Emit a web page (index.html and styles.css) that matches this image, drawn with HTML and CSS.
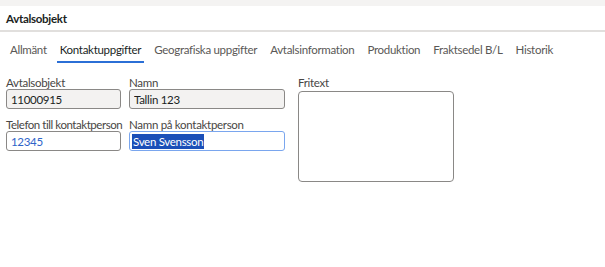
FILE: index.html
```html
<!DOCTYPE html>
<html lang="en">
<head>
    <meta charset="UTF-8">
    <title>Avtalsobjekt</title>
    <link rel="stylesheet" href="styles.css">
</head>
<body>

<div class="topbar"></div>

<div class="header">
    <h1>Avtalsobjekt</h1>
</div>

<!-- Tabs -->
<div class="tabs">
    <span class="tab">Allmänt</span>
    <span class="tab active">Kontaktuppgifter</span>
    <span class="tab">Geografiska uppgifter</span>
    <span class="tab">Avtalsinformation</span>
    <span class="tab">Produktion</span>
    <span class="tab">Fraktsedel B/L</span>
    <span class="tab">Historik</span>
</div>

<!-- Contact form -->
<div class="form">
    <div class="fields">
        <div class="field">
            <label>Avtalsobjekt</label>
            <input type="text" class="readonly" value="11000915" readonly>
        </div>
        <div class="field">
            <label>Namn</label>
            <input type="text" class="readonly" value="Tallin 123" readonly>
        </div>
        <div class="field">
            <label>Telefon till kontaktperson</label>
            <input type="text" class="link" value="12345">
        </div>
        <div class="field">
            <label>Namn på kontaktperson</label>
            <div class="input focused"><span class="selected">Sven Svensson</span></div>
        </div>
    </div>
    <div class="field note">
        <label>Fritext</label>
        <textarea></textarea>
    </div>
</div>

</body>
</html>
```

FILE: styles.css
```css
* {
    margin: 0;
    padding: 0;
    box-sizing: border-box;
}

body {
    font-family: Lato, 'Noto Sans', sans-serif;
    font-size: 11.5px;
    letter-spacing: -0.3px;
    color: #323130;
    background: #fff;
}

.topbar {
    height: 6px;
    background: #f4f3f2;
}

.header {
    height: 26px;
    display: flex;
    align-items: center;
    padding-left: 6px;
    border-bottom: 2px solid #e1dfdd;
}

.header h1 {
    font-size: 11.5px;
    font-weight: bold;
    color: #201f1e;
}

.tabs {
    display: flex;
    gap: 7px;
    padding-left: 7px;
}

.tab {
    padding: 11px 3px 4px;
    line-height: 14px;
    color: #5a5856;
    border-bottom: 2px solid transparent;
    white-space: nowrap;
}

.tab.active {
    color: #201f1e;
    border-bottom-color: #2b6fd6;
}

.form {
    display: flex;
    gap: 13px;
    padding: 14px 0 0 6px;
}

.fields {
    display: grid;
    grid-template-columns: 115px 156px;
    column-gap: 8px;
    row-gap: 10px;
    align-content: start;
}

.field label {
    display: block;
    height: 12px;
    line-height: 12px;
    color: #484644;
    white-space: nowrap;
}

.fields .field:nth-child(3) label {
    letter-spacing: -0.45px;
}

.field input,
.field .input {
    display: flex;
    align-items: center;
    width: 100%;
    height: 20px;
    padding: 0 4px;
    font-family: inherit;
    font-size: inherit;
    letter-spacing: inherit;
    color: #201f1e;
    border: 1px solid #8a8886;
    border-radius: 3px;
    background: #fff;
    outline: none;
}

.field input.readonly {
    background: #f3f2f1;
}

.field input.link {
    color: #2e64c9;
}

.field .input.focused {
    border-color: #7aa6ee;
    padding-left: 2px;
}

.selected {
    background: #1b4fb8;
    color: #fff;
    padding: 0 1px;
    line-height: 15px;
}

.note textarea {
    display: block;
    width: 156px;
    height: 91px;
    margin-top: 2px;
    border: 1px solid #8a8886;
    border-radius: 4px;
    resize: none;
    outline: none;
}
```
